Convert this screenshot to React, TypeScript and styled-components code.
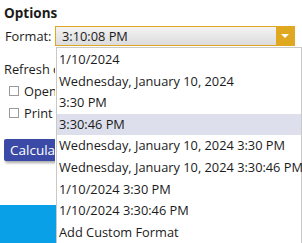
import React, {FC} from 'react';
import styled, {createGlobalStyle} from 'styled-components';

const GlobalStyle = createGlobalStyle`
  html, body {
    margin: 0;
    padding: 0;
    background: #ffffff;
  }
  body {
    font-family: "Open Sans", "Noto Sans", sans-serif;
    color: #1b1b1b;
  }
`;

const Page = styled.div`
  position: relative;
  width: 302px;
  height: 243px;
  overflow: hidden;
  display: flex;
  flex-direction: column;
  background: #ffffff;
`;

const Panel = styled.div`
  display: flex;
  flex-direction: column;
  padding: 0 4px;
`;

const Title = styled.div`
  font-size: 13.5px;
  font-weight: 700;
  line-height: 16px;
  margin-top: 5px;
`;

const FormatRow = styled.div`
  display: flex;
  align-items: center;
  margin-top: 5px;
`;

const Label = styled.span`
  font-size: 12.8px;
  width: 50px;
  padding-left: 1px;
`;

const ComboWrap = styled.div`
  position: relative;
`;

const Combo = styled.div`
  display: flex;
  align-items: stretch;
  width: 240px;
  height: 20px;
  box-sizing: border-box;
  border: 1px solid #e0a820;
  background: linear-gradient(#f3f3f3, #dcdcdc);
`;

const ComboText = styled.span`
  flex: 1;
  font-size: 12.8px;
  line-height: 18px;
  padding-left: 6px;
`;

const ComboButton = styled.span`
  width: 18px;
  display: flex;
  align-items: center;
  justify-content: center;
  background: #e0a820;
`;

const Arrow = styled.span`
  width: 0;
  height: 0;
  border-left: 4px solid transparent;
  border-right: 4px solid transparent;
  border-top: 4px solid #ffffff;
`;

const Dropdown = styled.ul`
  position: absolute;
  top: 21px;
  left: 1px;
  width: 246px;
  box-sizing: border-box;
  margin: 0;
  padding: 1px 0 0;
  list-style: none;
  background: #ffffff;
  border: 1px solid #c9c9c9;
  border-bottom: none;
  z-index: 10;
`;

const Item = styled.li<{$active?: boolean}>`
  height: 21.6px;
  line-height: 21.6px;
  font-size: 12.8px;
  padding-left: 2px;
  white-space: nowrap;
  background: ${p => (p.$active ? '#dde0ec' : 'transparent')};
`;

// the part of the panel that the open list covers is clipped at its edge
const Covered = styled.div`
  display: flex;
  flex-direction: column;
  width: 51px;
  overflow: hidden;
  white-space: nowrap;
  padding-bottom: 4px;
`;

const Refresh = styled.div`
  font-size: 12.8px;
  line-height: 16px;
  margin-top: 15px;
`;

const CheckRow = styled.label`
  display: flex;
  align-items: center;
  gap: 5px;
  font-size: 12.8px;
  line-height: 16px;
  margin-top: 6px;
  padding-left: 5px;
`;

const Box = styled.span`
  flex: none;
  width: 10px;
  height: 10px;
  box-sizing: border-box;
  border: 1px solid #9a9a9a;
  background: #ffffff;
`;

const Button = styled.button`
  align-self: flex-start;
  flex: none;
  margin-top: 18px;
  height: 22px;
  padding: 0 8px 0 6px;
  border: none;
  border-radius: 2px;
  background: #3b4aa6;
  color: #ffffff;
  font-family: inherit;
  font-size: 13.5px;
  box-shadow: 1px 2px 3px rgba(0, 0, 0, 0.35);
`;

const Band = styled.div`
  margin-top: auto;
  height: 38px;
  background: #0aa0e8;
`;

const formats = [
  '1/10/2024',
  'Wednesday, January 10, 2024',
  '3:30 PM',
  '3:30:46 PM',
  'Wednesday, January 10, 2024 3:30 PM',
  'Wednesday, January 10, 2024 3:30:46 PM',
  '1/10/2024 3:30 PM',
  '1/10/2024 3:30:46 PM',
  'Add Custom Format',
];

const App: FC = () => {
  return (
    <>
      <GlobalStyle />
      <Page>
        <Panel>
          <Title>Options</Title>
          <FormatRow>
            <Label>Format:</Label>
            <ComboWrap>
              <Combo>
                <ComboText>3:10:08 PM</ComboText>
                <ComboButton>
                  <Arrow />
                </ComboButton>
              </Combo>
              <Dropdown>
                {formats.map(f => (
                  <Item key={f} $active={f === '3:30:46 PM'}>
                    {f}
                  </Item>
                ))}
              </Dropdown>
            </ComboWrap>
          </FormatRow>
          <Covered>
            <Refresh>Refresh on change</Refresh>
            <CheckRow>
              <Box />
              Open at startup
            </CheckRow>
            <CheckRow>
              <Box />
              Print on calculate
            </CheckRow>
            <Button>Calculate</Button>
          </Covered>
        </Panel>
        <Band />
      </Page>
    </>
  );
};

export default App;
